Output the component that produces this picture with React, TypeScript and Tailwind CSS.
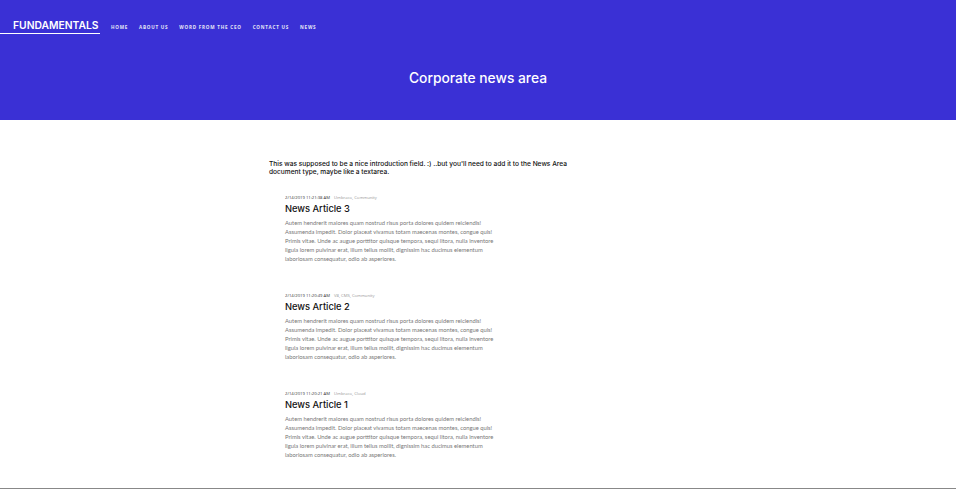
import React from 'react';

const navItems = ['Home', 'About us', 'Word from the CEO', 'Contact us', 'News'];

const body =
  'Autem hendrerit maiores quam nostrud risus porta dolores quidem reiciendis! Assumenda impedit. Dolor placeat vivamus totam maecenas montes, congue quis! Primis vitae. Unde ac augue porttitor quisque tempora, sequi litora, nulla inventore ligula lorem pulvinar erat, illum tellus mollit, dignissim hac ducimus elementum laboriosam consequatur, odio ab asperiores.';

const articles = [
  { date: '2/14/2019 11:21:38 AM', tags: 'Umbraco, Community', title: 'News Article 3' },
  { date: '2/14/2019 11:20:49 AM', tags: 'V8, CMS, Community', title: 'News Article 2' },
  { date: '2/14/2019 11:20:21 AM', tags: 'Umbraco, Cloud', title: 'News Article 1' },
];

const App: React.FC = () => {
  return (
    <div className="min-h-[489px] bg-white font-['Inter',sans-serif]">
      <header className="h-[120px] bg-[#3a30d5] text-white">
        <nav className="flex items-center pt-[19px]">
          <a className="block w-[100px] border-b border-white pl-[13px] pb-[1px] text-[10.3px] font-semibold leading-[13px]">
            FUNDAMENTALS
          </a>
          <ul className="ml-[11px] flex gap-[11px] pt-[1px]">
            {navItems.map((item) => (
              <li
                key={item}
                className="text-[4.6px] font-bold uppercase tracking-[0.75px] text-[#e6e6f5] font-['Open_Sans',sans-serif]"
              >
                {item}
              </li>
            ))}
          </ul>
        </nav>
        <h1 className="mt-[34px] text-center text-[13.8px] font-medium text-white">Corporate news area</h1>
      </header>

      <main className="border-b border-[#888] pb-[29px]">
        <div className="mx-auto w-[418px] pt-[40px]">
          <p className="w-[300px] text-[6.6px] font-medium leading-[8px] text-[#111]">
            This was supposed to be a nice introduction field. :) ..but you'll need to add it to the News Area
            document type, maybe like a textarea.
          </p>
          <div className="mt-[18px] flex flex-col gap-[29.5px] pl-[16px]">
            {articles.map((a) => (
              <article key={a.title} className="w-[214px]">
                <div className="text-[4.2px] leading-[8px] font-['Open_Sans',sans-serif]">
                  <span className="text-[#333]">{a.date}</span>
                  <span className="ml-[4px] text-[#999]">{a.tags}</span>
                </div>
                <h2 className="mt-[1px] text-[9.3px] font-medium leading-[12px] text-[#111]">{a.title}</h2>
                <p className="mt-[2.5px] text-[5.8px] leading-[9px] text-[#777] font-['Lato',sans-serif]">{body}</p>
              </article>
            ))}
          </div>
        </div>
      </main>
    </div>
  );
};

export default App;
